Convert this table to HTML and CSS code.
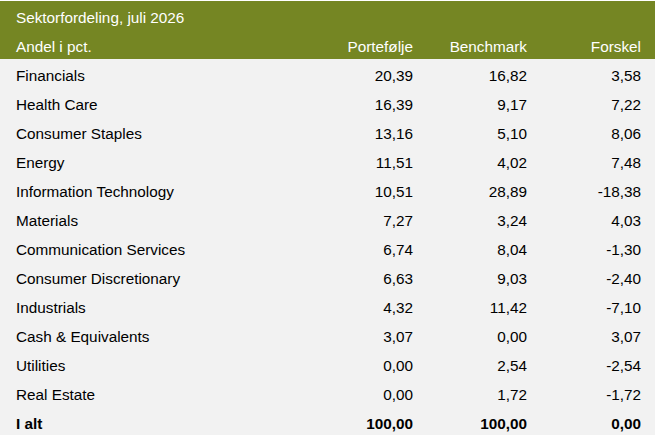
FILE: index.html
```html
<!DOCTYPE html>
<html lang="da">
<head>
<meta charset="utf-8">
<title>Sektorfordeling</title>
<link rel="stylesheet" href="styles.css">
</head>
<body>
<table class="sector">
  <colgroup>
    <col class="c-name"><col class="c-num"><col class="c-num"><col class="c-num">
  </colgroup>
  <thead>
    <tr class="title"><th colspan="4">Sektorfordeling, juli 2026</th></tr>
    <tr class="cols">
      <th class="name">Andel i pct.</th>
      <th class="num">Portefølje</th>
      <th class="num">Benchmark</th>
      <th class="num">Forskel</th>
    </tr>
  </thead>
  <tbody>
    <tr><td class="name">Financials</td><td class="num">20,39</td><td class="num">16,82</td><td class="num">3,58</td></tr>
    <tr><td class="name">Health Care</td><td class="num">16,39</td><td class="num">9,17</td><td class="num">7,22</td></tr>
    <tr><td class="name">Consumer Staples</td><td class="num">13,16</td><td class="num">5,10</td><td class="num">8,06</td></tr>
    <tr><td class="name">Energy</td><td class="num">11,51</td><td class="num">4,02</td><td class="num">7,48</td></tr>
    <tr><td class="name">Information Technology</td><td class="num">10,51</td><td class="num">28,89</td><td class="num">-18,38</td></tr>
    <tr><td class="name">Materials</td><td class="num">7,27</td><td class="num">3,24</td><td class="num">4,03</td></tr>
    <tr><td class="name">Communication Services</td><td class="num">6,74</td><td class="num">8,04</td><td class="num">-1,30</td></tr>
    <tr><td class="name">Consumer Discretionary</td><td class="num">6,63</td><td class="num">9,03</td><td class="num">-2,40</td></tr>
    <tr><td class="name">Industrials</td><td class="num">4,32</td><td class="num">11,42</td><td class="num">-7,10</td></tr>
    <tr><td class="name">Cash &amp; Equivalents</td><td class="num">3,07</td><td class="num">0,00</td><td class="num">3,07</td></tr>
    <tr><td class="name">Utilities</td><td class="num">0,00</td><td class="num">2,54</td><td class="num">-2,54</td></tr>
    <tr><td class="name">Real Estate</td><td class="num">0,00</td><td class="num">1,72</td><td class="num">-1,72</td></tr>
    <tr class="total"><td class="name">I alt</td><td class="num">100,00</td><td class="num">100,00</td><td class="num">0,00</td></tr>
  </tbody>
</table>
</body>
</html>
```
FILE: styles.css
```css
html, body {
  margin: 0;
  padding: 0;
  background: #ffffff;
}
body {
  padding-top: 1px;
  font-family: "Liberation Sans", Arial, sans-serif;
  font-size: 15.3px;
  color: #000000;
}
.sector {
  border-collapse: collapse;
  table-layout: fixed;
  width: 655px;
  background: #f2f2f2;
}
.c-name { width: 313px; }
.c-num { width: 114px; }
.sector th,
.sector td {
  height: 29px;
  box-sizing: border-box;
  padding: 4px 14px 0 16px;
  line-height: 25px;
  font-weight: normal;
  white-space: nowrap;
  vertical-align: middle;
}
.sector thead tr {
  background: #758623;
  color: #ffffff;
}
.sector th { text-align: left; }
.sector .num { text-align: right; padding-left: 0; }
.sector .total td { font-weight: bold; }
```
